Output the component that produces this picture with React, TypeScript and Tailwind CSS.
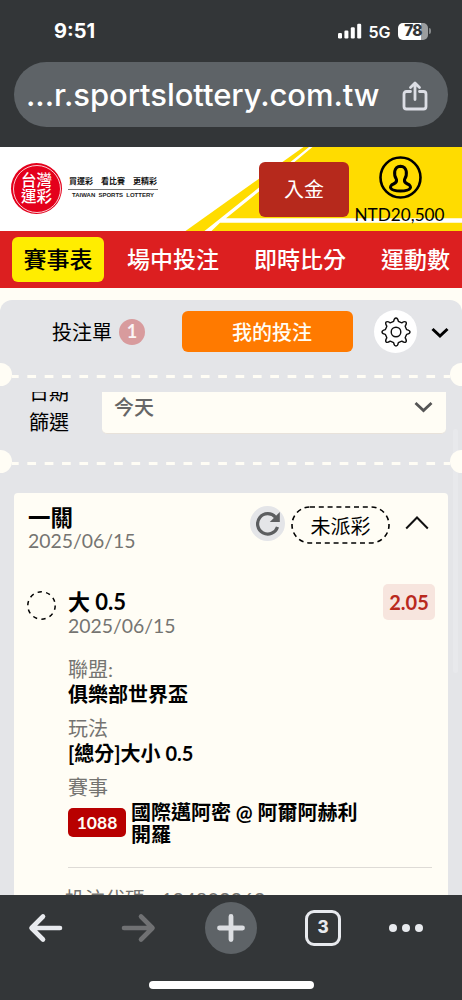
import type { ReactNode } from "react"
import { clsx } from "clsx"

const navItems = [
  { label: "賽事表", active: true },
  { label: "場中投注", active: false },
  { label: "即時比分", active: false },
  { label: "運動數", active: false },
]

const StatusBar = () => (
  <div className="flex h-[62px] items-center justify-between pr-[31px] pl-[54px] font-['Inter',sans-serif] text-white">
    <span className="text-[20px] font-bold">9:51</span>
    <div className="flex items-center">
      <svg width="24" height="16" viewBox="0 0 24 16" fill="currentColor">
        <rect x="0" y="10" width="4" height="5.5" rx="1.2" />
        <rect x="6.4" y="7.5" width="4" height="8" rx="1.2" />
        <rect x="12.8" y="4.2" width="4" height="11.3" rx="1.2" />
        <rect x="19.2" y="0.7" width="4" height="14.8" rx="1.2" />
      </svg>
      <span className="mt-px ml-[7px] w-[22px] text-[16px] font-semibold">5G</span>
      <div className="ml-[7.5px] flex h-[17px] w-[30px] items-center justify-center rounded-[5px] bg-[linear-gradient(90deg,#fff_78%,#9b9d9e_78%)] text-[15.5px] font-extrabold tracking-tighter text-[#333638]">
        78
      </div>
      <div className="ml-px h-[6px] w-[2px] rounded-r-full bg-[#85888a]" />
    </div>
  </div>
)

const AddressBar = () => (
  <div className="mx-[14px] flex h-[65px] items-center justify-between rounded-full bg-[#5e6367] pr-[20px] pl-[12px] font-['Inter',sans-serif]">
    <span className="mt-px text-[31px] font-medium tracking-[-0.07px] whitespace-nowrap text-white">...r.sportslottery.com.tw</span>
    <svg className="mt-[2px]" width="26" height="30" viewBox="0 0 26 30" fill="none" stroke="#dcdee5" strokeWidth="2.8" strokeLinecap="round" strokeLinejoin="round">
      <path d="M8.5 10.5H4.5Q2 10.5 2 13V25.5Q2 28 4.5 28H21.5Q24 28 24 25.5V13Q24 10.5 21.5 10.5H17.5" />
      <path d="M13 18.5V2.5M8.5 6.5L13 2L17.5 6.5" />
    </svg>
  </div>
)

const Header = () => (
  <header className="relative h-[84px] bg-white">
    <svg className="absolute inset-0" width="462" height="84" viewBox="0 0 462 84">
      <path d="M185.5 84L303.5 0H462V84Z" fill="#ffdc00" />
      <path d="M204.5 84L259 40.5L309 0H312.5L259 44.5L226 71.3H462V75.7H220L211.5 84Z" fill="#fff" />
    </svg>
    <div className="relative flex h-full">
      <div className="mt-[16px] ml-[11px] flex size-[51px] items-center justify-center rounded-full bg-[#e4001b] p-[1.5px]">
        <div className="flex size-full flex-col items-center justify-center rounded-full border border-white/80 text-[15.5px] leading-[15.5px] font-medium text-white">
          <span>台灣</span>
          <span>運彩</span>
        </div>
      </div>
      <div className="mt-[27px] ml-[6px] w-[90px]">
        <div className="flex justify-between border-b border-[#777] px-[1px] text-[8px] leading-[15px] font-bold text-[#111]">
          <span>買運彩</span>
          <span>看比賽</span>
          <span>更精彩</span>
        </div>
        <div className="mt-[1px] text-center font-['Liberation_Sans',sans-serif] text-[6px] leading-[8px] font-bold whitespace-nowrap text-[#222] [word-spacing:1.5px]">
          TAIWAN SPORTS LOTTERY
        </div>
      </div>
      <button className="mt-[14.5px] ml-[101px] h-[55px] w-[90px] rounded-[6px] bg-[#b6291c] text-[20px] text-white">
        入金
      </button>
      <div className="ml-[4px] flex w-[93px] flex-col items-center pt-[9px]">
        <svg width="44" height="44" viewBox="0 0 44 44" fill="none" stroke="#000" strokeWidth="2.6">
          <circle cx="22.5" cy="21.5" r="20" />
          <path d="M18.5 23.5C15.5 19 15.5 10.5 22.5 10.2C29.5 10.5 29.5 19 26.5 23.5C26 26 27 27 29.5 28C34.5 30 34 35 22.5 35C11 35 10.5 30 15.5 28C18 27 19 26 18.5 23.5Z" strokeWidth="3" />
        </svg>
        <span className="mt-[4px] text-[17.2px] leading-[22px] text-black">NTD20,500</span>
      </div>
    </div>
  </header>
)

const Nav = () => (
  <nav className="flex h-[57px] items-center overflow-hidden bg-[#dc1f20] pl-[12px] text-[23px] whitespace-nowrap text-white">
    {navItems.map((item, i) => (
      <a
        key={item.label}
        className={clsx(
          "shrink-0",
          item.active ? "flex h-[45px] w-[92px] items-center justify-center rounded-[6px] bg-[#ffed00] font-medium text-black" : "font-medium",
          i === 1 && "ml-[23px]",
          i > 1 && "ml-[35px]"
        )}
      >
        {item.label}
      </a>
    ))}
  </nav>
)

// Perforated ticket edge: dashed line with a notch on either side
const Perforation = () => (
  <div className="relative z-10 flex h-[23px] items-center justify-between">
    <div className="h-[23px] w-[12px] rounded-r-full bg-[#fffdf5]" />
    <svg className="mt-[3px]" width="438" height="3" viewBox="0 0 438 3">
      <path d="M-2 1.5H438" stroke="#fffdf5" strokeWidth="3" strokeDasharray="8.7 8.65" />
    </svg>
    <div className="h-[23px] w-[12px] rounded-l-full bg-[#fffdf5]" />
  </div>
)

const Field = ({ label, children }: { label: string; children: ReactNode }) => (
  <div className="mb-[9px]">
    <div className="text-[20px] leading-[25px] text-[#757471]">{label}</div>
    <div className="text-[20px] leading-[25px] font-bold">{children}</div>
  </div>
)

const Tabs = () => (
  <div className="flex h-[63px] items-center">
    <div className="ml-[52px] flex w-[130px] items-center text-[20px]">
      投注單
      <span className="ml-[7px] flex size-[26px] items-center justify-center rounded-full bg-[#d89b9d] text-[18px] font-bold text-white/90">1</span>
    </div>
    <button className="h-[41px] w-[171px] rounded-[6px] bg-[#ff7a00] pl-[9px] text-[20px] font-medium text-[#fffdf5]">我的投注</button>
    <button className="ml-[21px] flex size-[43px] items-center justify-center rounded-full bg-white">
      <svg width="30" height="30" viewBox="-15 -15 30 30" fill="none" stroke="#111" strokeWidth="1.4" strokeLinejoin="round">
        <circle r="4.8" />
        <path d="M-2.4 -10.7C-2 -12.7 -1.5 -14 0 -14S2 -12.7 2.4 -10.7Q4 -9.8 5.8 -9.2C7.5 -10.3 8.8 -11 9.9 -9.9S10.3 -7.5 9.2 -5.8Q9.8 -4 10.7 -2.4C12.7 -2 14 -1.5 14 0S12.7 2 10.7 2.4Q9.8 4 9.2 5.8C10.3 7.5 11 8.8 9.9 9.9S7.5 10.3 5.8 9.2Q4 9.8 2.4 10.7C2 12.7 1.5 14 0 14S-2 12.7 -2.4 10.7Q-4 9.8 -5.8 9.2C-7.5 10.3 -8.8 11 -9.9 9.9S-10.3 7.5 -9.2 5.8Q-9.8 4 -10.7 2.4C-12.7 2 -14 1.5 -14 0S-12.7 -2 -10.7 -2.4Q-9.8 -4 -9.2 -5.8C-10.3 -7.5 -11 -8.8 -9.9 -9.9S-7.5 -10.3 -5.8 -9.2Q-4 -9.8 -2.4 -10.7Z" />
      </svg>
    </button>
    <svg className="mt-[2px] ml-[14px]" width="18" height="12" viewBox="0 0 18 12" fill="none" stroke="#000" strokeWidth="3">
      <path d="M1.5 2L9 9L16.5 2" />
    </svg>
  </div>
)

const DateFilter = () => (
  <div className="mt-[6px] flex h-[42px] items-end overflow-hidden">
    <div className="mb-[-3px] ml-[29px] w-[73px] text-[20px] leading-[30px]">
      日期
      <br />
      篩選
    </div>
    <div className="flex h-[60px] w-[344px] items-center justify-between rounded-[5px] border-b border-[#e8e2da] bg-[#fffdf5] pr-[13px] pl-[12px]">
      <span className="mt-[6px] text-[20px] font-medium text-[#666]">今天</span>
      <svg className="mt-[7px]" width="19" height="12" viewBox="0 0 19 12" fill="none" stroke="#555" strokeWidth="2.8">
        <path d="M1.5 2L9.5 9.5L17.5 2" />
      </svg>
    </div>
  </div>
)

const BetCard = () => (
  <div className="mt-[20px] ml-[14px] h-[430px] w-[434px] rounded-[4px] bg-[#fffdf5] pr-[16px] pl-[14px]">
    <div className="flex h-[91px] pt-[13px]">
      <div className="w-[222px]">
        <div className="text-[22.5px] leading-[23px] font-bold">一關</div>
        <div className="text-[19.4px] leading-[24px] text-[#757471]">2025/06/15</div>
      </div>
      <button className="flex size-[35px] items-center justify-center rounded-full bg-[#e4e5e8]">
        <svg width="24" height="24" viewBox="0 0 24 24" fill="none" stroke="#5c5e60" strokeWidth="3.2">
          <path d="M21.5 15A10.2 10.2 0 1 1 19.5 5.2" />
          <path d="M23.8 0V10H13.8Z" fill="#5c5e60" stroke="none" />
        </svg>
      </button>
      <div className="ml-[6px] h-[38px] w-[99px]">
        <svg className="absolute" width="99" height="38" viewBox="0 0 99 38" fill="none" stroke="#000" strokeWidth="1.6">
          <rect x="1" y="1" width="97" height="36" rx="18" strokeDasharray="5 3.8" />
        </svg>
        <div className="text-center text-[20px] leading-[40px]">未派彩</div>
      </div>
      <svg className="mt-[9px] ml-[15px]" width="24" height="15" viewBox="0 0 24 15" fill="none" stroke="#111" strokeWidth="2">
        <path d="M1.2 13.5L12 2.5L22.8 13.5" />
      </svg>
    </div>
    <div className="flex">
      <svg className="mt-[7px] -ml-px shrink-0" width="30" height="30" viewBox="0 0 30 30" fill="none" stroke="#000" strokeWidth="1.5">
        <circle cx="14.5" cy="14.5" r="13.7" strokeDasharray="4.3 4.3" />
      </svg>
      <div className="ml-[11px] flex-1">
        <div className="flex items-start">
          <div className="flex-1 pt-[6px]">
            <div className="text-[22px] leading-[23.5px] font-bold">大 0.5</div>
            <div className="text-[19.4px] leading-[24px] text-[#757471]">2025/06/15</div>
          </div>
          <div className="mr-[-3px] h-[36px] w-[52px] rounded-[5px] bg-[#f7e5de] text-center text-[20px] leading-[37px] font-bold text-[#b9291d]">
            2.05
          </div>
        </div>
        <div className="pt-[19.5px]">
          <Field label="聯盟:">俱樂部世界盃</Field>
          <Field label="玩法">[總分]大小 0.5</Field>
          <Field label="賽事">
            <div className="flex h-[43px] items-center pt-[4px]">
              <span className="mt-[-3px] mr-[5px] h-[29px] w-[58px] shrink-0 rounded-[5px] bg-[#b80000] text-center text-[17.5px] leading-[30px] text-[#fffdf5]">1088</span>
              <span className="leading-[21.5px] whitespace-nowrap">
                國際邁阿密 @ 阿爾阿赫利
                <br />
                開羅
              </span>
            </div>
          </Field>
        </div>
        <div className="mt-[24px] border-t border-[#dedbd6]" />
        <div className="mt-[16px] -ml-[3px] flex gap-[16px] text-[20px] text-[#757471]">
          <span>投注代碼</span>
          <span>194802262</span>
        </div>
      </div>
    </div>
  </div>
)

const BottomBar = () => (
  <footer className="h-[105px] bg-[#333638] pt-[6px]">
    <div className="flex h-[54px] items-center">
      <svg className="ml-[28px]" width="35" height="30" viewBox="0 0 35 30" fill="none" stroke="#e8eaee" strokeWidth="4.6" strokeLinecap="round" strokeLinejoin="round">
        <path d="M32 15H4M15 3.5L3.5 15L15 26.5" />
      </svg>
      <svg className="ml-[57px]" width="36" height="30" viewBox="0 0 36 30" fill="none" stroke="#707173" strokeWidth="4.6" strokeLinecap="round" strokeLinejoin="round">
        <path d="M4 15H32M21 3.5L32.5 15L21 26.5" />
      </svg>
      <button className="mt-[-1px] ml-[49px] flex size-[52px] items-center justify-center rounded-full bg-[#5e6367]">
        <svg width="28" height="28" viewBox="0 0 28 28" stroke="#dcdee2" strokeWidth="4.8" strokeLinecap="round">
          <path d="M2.5 14H25.5M14 2.5V25.5" />
        </svg>
      </button>
      <div className="ml-[48px] flex size-[36px] items-center justify-center rounded-[9px] border-[3.5px] border-[#e8eaee] font-['Inter',sans-serif] text-[17px] font-extrabold text-[#e8eaee]">3</div>
      <div className="ml-[48px] flex gap-[5px]">
        <span className="size-[8px] rounded-full bg-[#e8eaee]" />
        <span className="size-[8px] rounded-full bg-[#e8eaee]" />
        <span className="size-[8px] rounded-full bg-[#e8eaee]" />
      </div>
    </div>
    <div className="mx-auto mt-[26px] h-[8px] w-[165px] rounded-full bg-white" />
  </footer>
)

export default function App() {
  return (
    <div className="flex h-[1000px] w-[462px] flex-col overflow-hidden bg-[#fffdf5] font-['Lato','Noto_Sans_CJK_TC',sans-serif] text-black">
      <div className="h-[147px] shrink-0 bg-[#333638]">
        <StatusBar />
        <AddressBar />
      </div>
      <main className="h-[748px] shrink-0 overflow-hidden">
        <Header />
        <Nav />
        <section className="relative mt-[12px] h-[596px] overflow-hidden rounded-t-[12px] bg-[#e4e5e8]">
          <Tabs />
          <Perforation />
          <DateFilter />
          <div className="h-[16px]" />
          <Perforation />
          <BetCard />
          <div className="absolute top-[129px] right-[4px] h-[244px] w-[5px] rounded-full bg-[#e8e9ec]" />
        </section>
      </main>
      <BottomBar />
    </div>
  )
}
